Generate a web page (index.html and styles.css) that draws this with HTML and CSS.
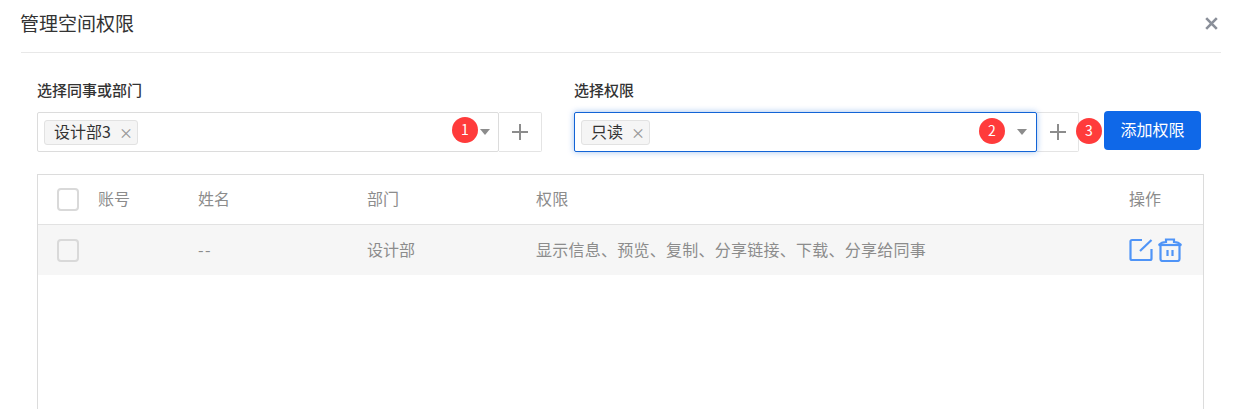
FILE: index.html
```html
<!DOCTYPE html>
<html lang="zh">
<head>
<meta charset="utf-8">
<title>管理空间权限</title>
<link rel="stylesheet" href="styles.css">
</head>
<body>
<div class="dialog">
  <header class="dialog-head">
    <h1 class="dialog-title">管理空间权限</h1>
    <button class="close" aria-label="关闭">
      <svg width="13" height="13" viewBox="0 0 13 13"><path d="M1.200 1.200 11.800 11.800M11.800 1.200 1.200 11.800" stroke="#8a8f99" stroke-width="2.600" fill="none"/></svg>
    </button>
  </header>
  <section class="form">
    <div class="field field-a">
      <label class="field-label">选择同事或部门</label>
      <div class="control">
        <div class="select">
          <span class="tag">设计部3<span class="tag-x">×</span></span>
          <span class="caret"></span>
          <span class="badge badge-1">1</span>
        </div>
        <button class="plus" aria-label="添加"><svg width="16" height="16" viewBox="0 0 16 16"><path d="M8 0V16M0 8H16" stroke="#8c8c8c" stroke-width="2" fill="none"/></svg></button>
      </div>
    </div>
    <div class="field field-b">
      <label class="field-label">选择权限</label>
      <div class="control">
        <div class="select select-focus">
          <span class="tag">只读<span class="tag-x">×</span></span>
          <span class="caret caret-b"></span>
          <span class="badge badge-2">2</span>
        </div>
        <button class="plus plus-b" aria-label="添加"><svg width="16" height="16" viewBox="0 0 16 16"><path d="M8 0V16M0 8H16" stroke="#8c8c8c" stroke-width="2" fill="none"/></svg></button>
      </div>
    </div>
    <div class="submit-wrap">
      <button class="submit">添加权限</button>
      <span class="badge badge-3">3</span>
    </div>
  </section>
  <section class="table">
    <div class="row row-head">
      <span class="cell c-check"><span class="check"></span></span>
      <span class="cell c-account">账号</span>
      <span class="cell c-name">姓名</span>
      <span class="cell c-dept">部门</span>
      <span class="cell c-perm">权限</span>
      <span class="cell c-op">操作</span>
    </div>
    <div class="row row-body">
      <span class="cell c-check"><span class="check"></span></span>
      <span class="cell c-account"></span>
      <span class="cell c-name c-dash">--</span>
      <span class="cell c-dept">设计部</span>
      <span class="cell c-perm">显示信息、预览、复制、分享链接、下载、分享给同事</span>
      <span class="cell c-op icons">
        <svg width="24" height="24" viewBox="0 0 24 24" fill="none" stroke="#4f94f7" stroke-width="2.200"><path d="M13 2H3a1.500 1.500 0 0 0-1.500 1.500v17A1.500 1.500 0 0 0 3 22h18a1.500 1.500 0 0 0 1.500-1.500V11"/><path d="M11 13 22.500 2"/></svg>
        <svg width="24" height="24" viewBox="0 0 24 24" fill="none" stroke="#4f94f7" stroke-width="2.200"><path d="M0.500 7H23.500"/><path d="M1 7C3 4.500 6 4 8 4V1.500H16V4C18 4 21 4.500 23 7"/><path d="M2.500 7.500V21A2 2 0 0 0 4.500 23H19.500A2 2 0 0 0 21.500 21V7.500"/><path d="M9.500 12V18M14.500 12V18"/></svg>
      </span>
    </div>
  </section>
</div>
</body>
</html>
```
FILE: styles.css
```css
* { box-sizing: border-box; }
html, body { margin: 0; height: 100%; overflow: hidden; background: #fff; }
body { font-family: "Noto Sans CJK SC", "Noto Sans", sans-serif; color: #333; }
button { font: inherit; padding: 0; cursor: pointer; }
.dialog { width: 1234px; height: 409px; overflow: hidden; }
.dialog-head {
  display: flex; align-items: center; justify-content: space-between;
  height: 53px; margin: 0 13px 0 21px; padding-bottom: 6px; border-bottom: 1px solid #e8e8e8;
}
.dialog-title { margin: 0 0 0 -1px; font-size: 19px; font-weight: 400; color: #333; line-height: 26px; }
.close { display: flex; border: 0; background: none; margin-right: 3px; }
.form { display: flex; align-items: flex-start; padding: 26px 0 0 37px; }
.field-a { width: 505px; }
.field-b { width: 505px; margin-left: 32px; }
.field-label { display: block; font-size: 15px; font-weight: 500; color: #333; line-height: 22px; margin-bottom: 11px; }
.control { display: flex; height: 40px; }
.select {
  position: relative; flex: 1; display: flex; align-items: center; padding-left: 6px;
  border: 1px solid #dcdcdc; border-radius: 2px; background: #fff;
}
.select-focus { border-color: #1264d6; box-shadow: 0 0 6px rgba(18, 100, 214, .4); z-index: 1; }
.tag {
  display: inline-flex; align-items: center; height: 25px; padding: 0 4px 2px 9px;
  font-size: 16px; color: #333; background: #f5f5f5; border: 1px solid #e2e2e2; border-radius: 3px;
}
.tag-x { margin-left: 8px; font-size: 14px; font-weight: 500; color: #999; line-height: 1; padding-top: 2px; }
.caret {
  position: absolute; right: 8px; top: 16px; width: 0; height: 0;
  border-left: 5px solid transparent; border-right: 5px solid transparent; border-top: 6px solid #8c8c8c;
}
.caret-b { right: 9px; }
.plus {
  display: flex; align-items: center; justify-content: center; width: 43px; margin-left: 0;
  border: 1px solid #e4e4e4; border-left: 0; border-radius: 0 2px 2px 0; background: #fff;
}
.plus-b { width: 42px; }
.badge {
  position: absolute; display: flex; align-items: center; justify-content: center;
  background: #ff3b3b; color: #fff; font-size: 14px; border-radius: 50%; width: 26px; height: 26px; line-height: 1;
  padding-bottom: 3px; z-index: 2;
}
.badge-1 { right: 20px; top: 4px; }
.badge-2 { right: 31px; top: 5px; }
.submit-wrap { position: relative; margin: 32px 0 0 25px; }
.submit {
  display: block; width: 97px; height: 39px; border: 0; border-radius: 4px;
  background: #0f68e8; color: #fff; font-size: 16px; padding-bottom: 3px;
}
.badge-3 { left: -28px; top: 7px; }
.table {
  margin: 22px 30px 0 37px; width: 1167px; height: 260px;
  border: 1px solid #dcdcdc;
}
.row { display: flex; align-items: center; font-size: 16px; color: #8c8c8c; }
.row-head { height: 50px; border-bottom: 1px solid #e2e2e2; }
.row-body { height: 50px; background: #f6f6f6; }
.cell { display: block; padding-bottom: 3px; }
.c-check { width: 60px; padding: 0 0 0 19px; display: flex; }
.check { width: 22px; height: 23px; border: 2px solid #d9d9d9; border-radius: 4px; background: #fff; }
.row-body .check { background: #f6f6f6; }
.c-account { width: 100px; }
.c-name { width: 169px; }
.c-dash { letter-spacing: 1.500px; }
.c-dept { width: 169px; }
.c-perm { width: 593px; letter-spacing: .25px; }
.c-op { width: 70px; }
.icons { display: flex; gap: 5px; padding: 0; }
```
